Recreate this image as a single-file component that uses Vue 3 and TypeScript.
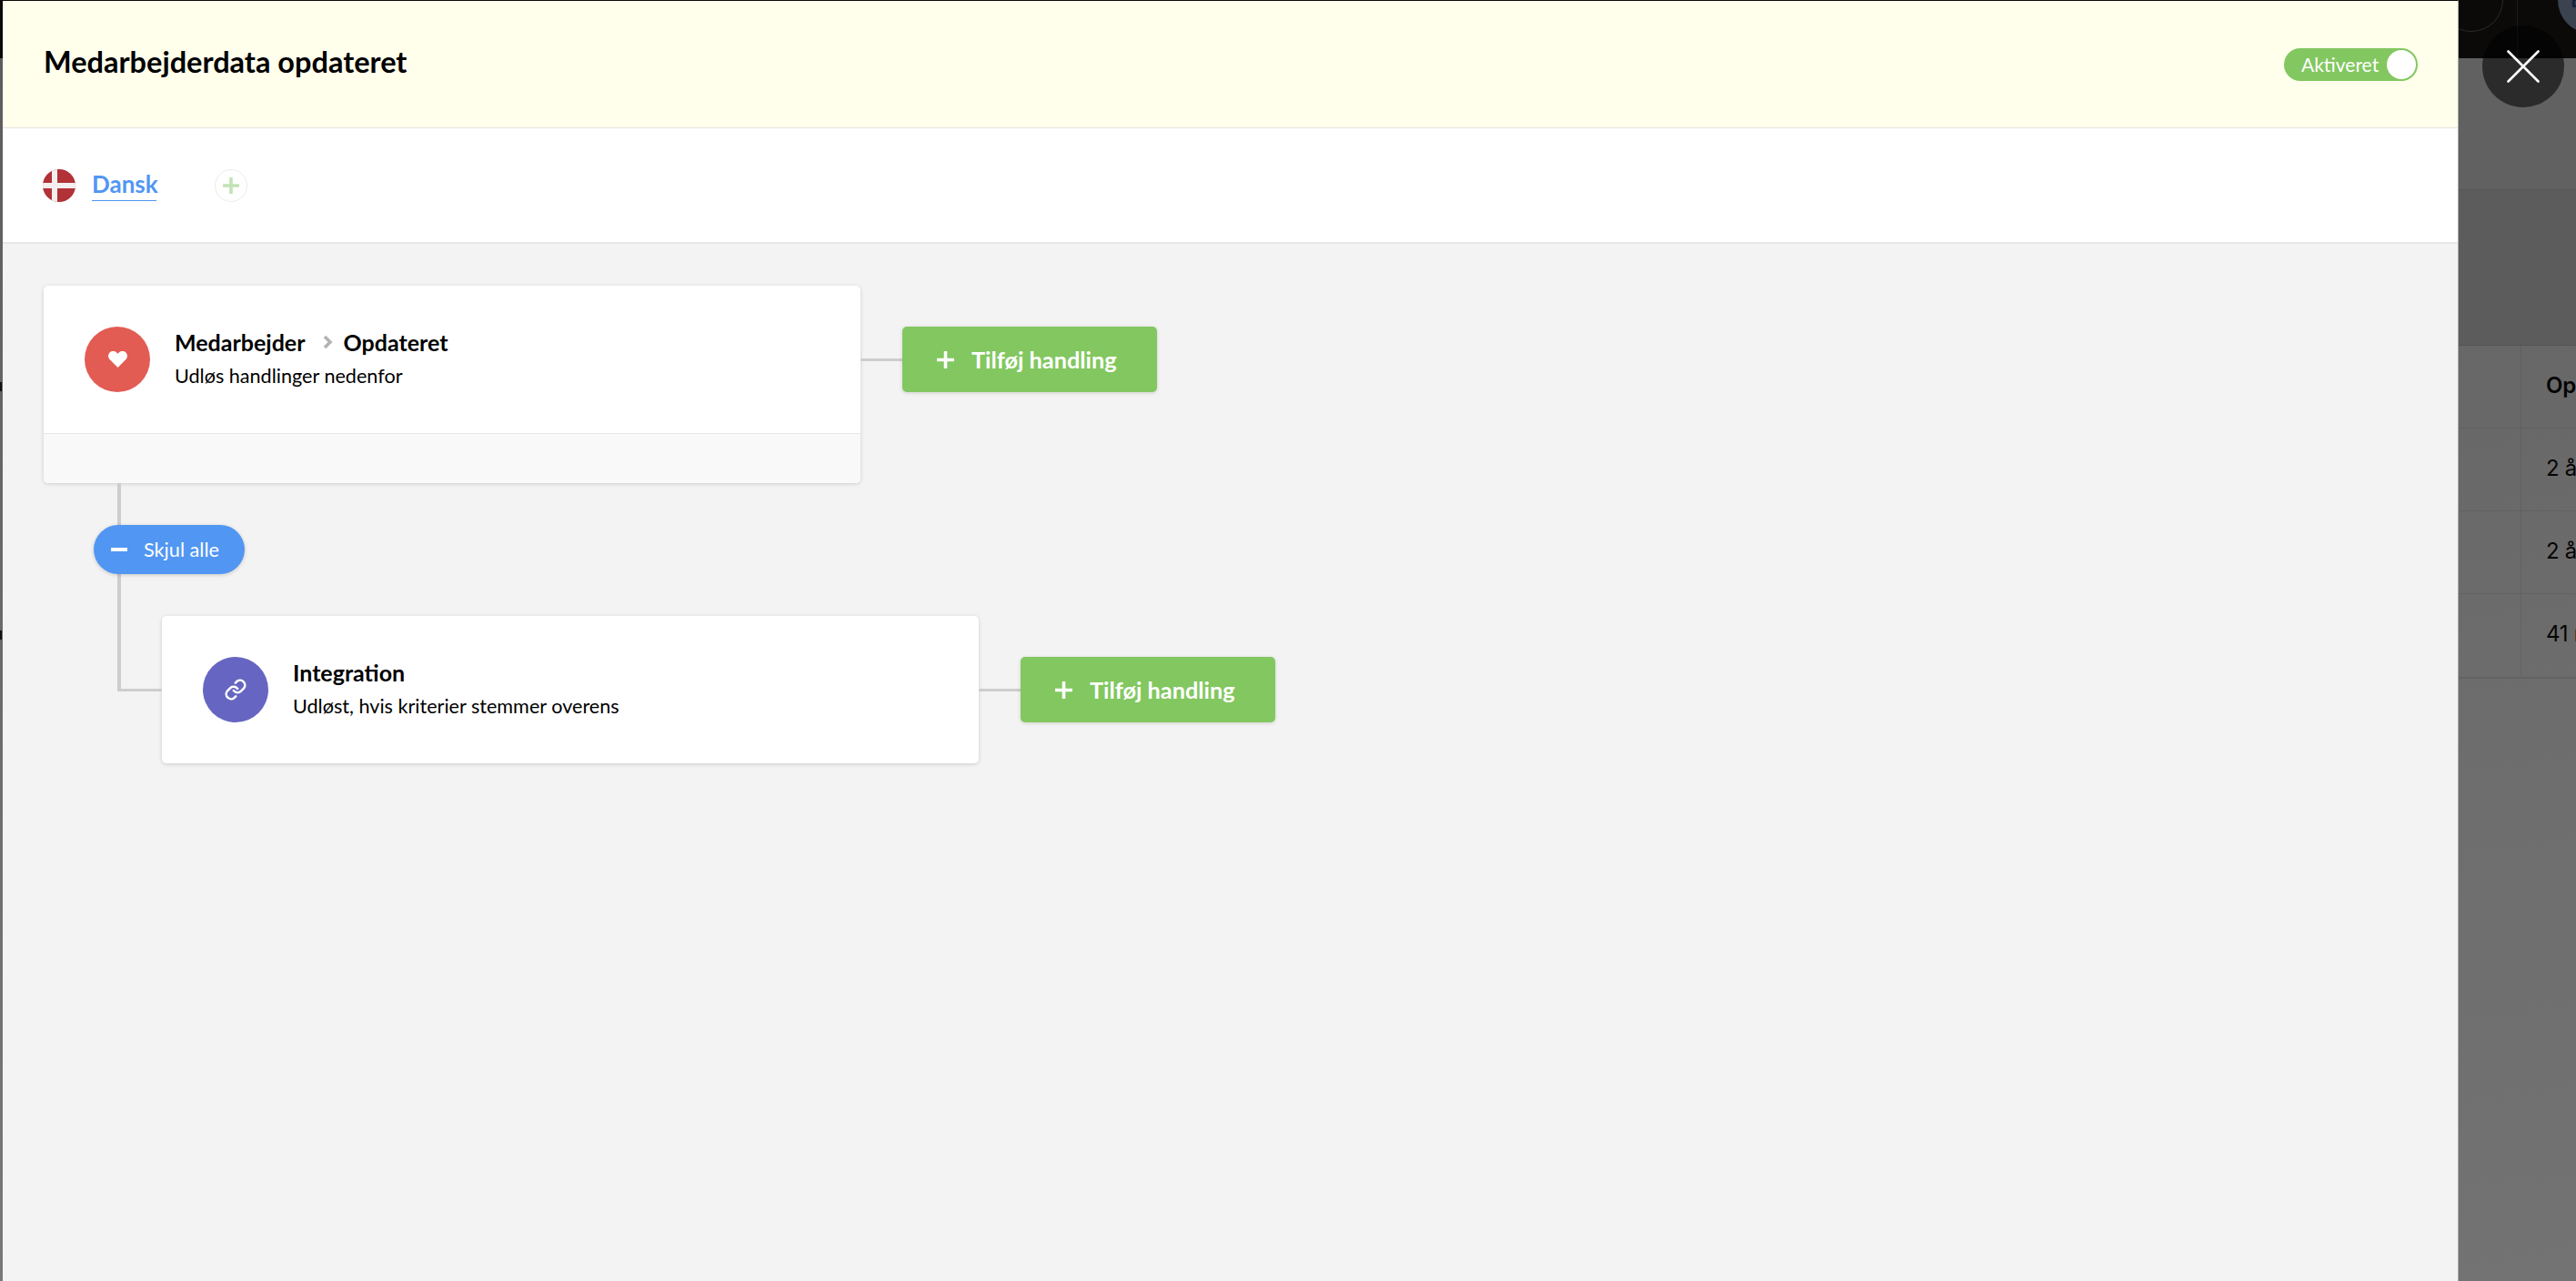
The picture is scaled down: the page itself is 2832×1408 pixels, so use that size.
<script setup lang="ts">
interface Row { text: string; bold?: boolean }
const rows: Row[] = [
  { text: 'Opdateret', bold: true },
  { text: '2 år siden' },
  { text: '2 år siden' },
  { text: '41 minutter siden' },
]
</script>

<template>
  <div class="page">
    <div class="sliver">
      <span class="sliver-top"></span>
      <span class="mark mark-a"></span>
      <span class="mark mark-b"></span>
    </div>
    <main class="modal">
      <header class="head">
        <h1 class="title">Medarbejderdata opdateret</h1>
        <div class="toggle">
          <span class="toggle-label">Aktiveret</span>
          <span class="knob"></span>
        </div>
      </header>
      <nav class="tabs">
        <svg class="flag" viewBox="0 0 36 36" aria-hidden="true">
          <clipPath id="flagclip"><circle cx="18" cy="18" r="18" /></clipPath>
          <g clip-path="url(#flagclip)">
            <rect width="36" height="36" fill="#b13237" />
            <rect x="10" width="6" height="36" fill="#f4efef" />
            <rect y="15" width="36" height="6" fill="#f4efef" />
          </g>
        </svg>
        <span class="lang">Dansk</span>
        <span class="add-lang">
          <svg viewBox="0 0 18 18" width="18" height="18" aria-hidden="true">
            <path d="M9 1v16M1 9h16" stroke="#c3e2b5" stroke-width="3.6" stroke-linecap="round" />
          </svg>
        </span>
      </nav>
      <section class="canvas">
        <div class="row">
          <article class="card">
            <div class="card-main">
              <span class="dot red">
                <svg viewBox="0 0 22 19" width="21" height="18" aria-hidden="true">
                  <path d="M11 19 1.6 9.6C-.5 7.4-.5 3.6 1.6 1.6 3.8-.5 7.4-.5 9.6 1.6L11 3l1.4-1.4c2.2-2.1 5.8-2.1 8 0 2.1 2 2.1 5.8 0 8z" fill="#fff" />
                </svg>
              </span>
              <div class="copy">
                <div class="card-title">
                  <span>Medarbejder</span>
                  <svg class="chev" viewBox="0 0 11 16" width="11" height="16" aria-hidden="true">
                    <path d="M2 2l6 6-6 6" fill="none" stroke="#b3b3b3" stroke-width="3.6" />
                  </svg>
                  <span>Opdateret</span>
                </div>
                <div class="card-sub">Udløs handlinger nedenfor</div>
              </div>
            </div>
            <div class="card-foot"></div>
          </article>
          <span class="wire"></span>
          <button class="add-btn" type="button">
            <svg viewBox="0 0 19 19" width="19" height="19" aria-hidden="true">
              <path d="M9.5 0v19M0 9.5h19" stroke="#fff" stroke-width="3.6" />
            </svg>
            <span>Tilføj handling</span>
          </button>
        </div>

        <div class="branch">
          <div class="pill-row">
            <button class="pill" type="button">
              <span class="minus"></span>
              <span>Skjul alle</span>
            </button>
          </div>
          <div class="row child-row">
            <span class="elbow"></span>
            <article class="card">
              <div class="card-main">
                <span class="dot purple">
                  <svg viewBox="0 0 24 24" width="26" height="26" fill="none" stroke="#fff" stroke-width="2.3" stroke-linecap="round" stroke-linejoin="round" aria-hidden="true">
                    <path d="M10 13a5 5 0 0 0 7.5.5l3-3a5 5 0 0 0-7-7l-1.7 1.7" />
                    <path d="M14 11a5 5 0 0 0-7.5-.5l-3 3a5 5 0 0 0 7 7l1.7-1.7" />
                  </svg>
                </span>
                <div class="copy">
                  <div class="card-title"><span>Integration</span></div>
                  <div class="card-sub">Udløst, hvis kriterier stemmer overens</div>
                </div>
              </div>
            </article>
            <span class="wire"></span>
            <button class="add-btn" type="button">
              <svg viewBox="0 0 19 19" width="19" height="19" aria-hidden="true">
                <path d="M9.5 0v19M0 9.5h19" stroke="#fff" stroke-width="3.6" />
              </svg>
              <span>Tilføj handling</span>
            </button>
          </div>
        </div>
      </section>
    </main>

    <aside class="backdrop">
      <div class="topbar">
        <span class="ring"></span>
        <span class="rule"></span>
        <span class="avatar">E</span>
      </div>
      <div class="band-a"></div>
      <div class="band-b"></div>
      <div class="table">
        <div v-for="r in rows" :key="r.text" class="t-row">
          <div class="t-spacer"></div>
          <div class="t-cell" :class="{ strong: r.bold }">{{ r.text }}</div>
        </div>
      </div>
      <button class="close" type="button" aria-label="Luk">
        <svg viewBox="0 0 36 36" width="36" height="36" aria-hidden="true">
          <path d="M1.5 1.5l33 33M34.5 1.5l-33 33" stroke="#fff" stroke-width="2.6" stroke-linecap="round" />
        </svg>
      </button>
    </aside>
  </div>
</template>

<style>
html, body { margin: 0; background: #5c5c5c; overflow: hidden; }
</style>

<style scoped>
.page {
  width: 2832px;
  height: 1408px;
  display: flex;
  overflow: hidden;
  font-family: Lato, "Open Sans", sans-serif;
  color: #000;
  background: #555;
}
.sliver {
  width: 3px;
  flex: none;
  display: flex;
  flex-direction: column;
  background: linear-gradient(180deg, #5c5c5c, #787878);
}
.sliver-top { height: 64px; background: #0b0a09; }
.mark { width: 2px; height: 10px; background: #111; }
.mark-a { margin-top: 356px; }
.mark-b { margin-top: 263px; }
.modal {
  width: 2700px;
  flex: none;
  box-sizing: border-box;
  display: flex;
  flex-direction: column;
  background: #f3f3f3;
  border-top: 1px solid #0b0a09;
  border-right: 1px solid #a8a8a8;
}
.head {
  height: 140px;
  box-sizing: border-box;
  flex: none;
  display: flex;
  align-items: center;
  justify-content: space-between;
  padding: 0 44px 0 45px;
  background: #ffffec;
  border-bottom: 1px solid #e3e3e3;
}
.title { margin: 0; font-size: 32.5px; font-weight: 700; line-height: 1; position: relative; top: -2px; }
.toggle {
  width: 147px;
  height: 36px;
  box-sizing: border-box;
  display: flex;
  align-items: center;
  justify-content: space-between;
  padding: 0 2px 0 19px;
  border-radius: 18px;
  background: #82c760;
  color: #fff;
  font-size: 21px;
}
.knob { width: 32px; height: 32px; border-radius: 50%; background: #fff; }
.tabs {
  height: 127px;
  box-sizing: border-box;
  flex: none;
  display: flex;
  align-items: center;
  padding-left: 44px;
  background: #fff;
  border-bottom: 2px solid #e6e6e6;
}
.flag { width: 36px; height: 36px; }
.lang {
  margin-left: 18px;
  color: #5196f3;
  font-size: 26px;
  font-weight: 700;
  line-height: 32px;
  padding-bottom: 2px;
  border-bottom: 1px solid #5196f3;
  width: 71px;
}
.add-lang {
  margin-left: 64px;
  width: 36px;
  height: 36px;
  box-sizing: border-box;
  border: 1px solid #ececec;
  border-radius: 50%;
  display: flex;
  align-items: center;
  justify-content: center;
}
.canvas {
  flex: 1;
  padding: 46px 0 0 45px;
  display: flex;
  flex-direction: column;
}
.row { display: flex; align-items: flex-start; }
.card {
  width: 898px;
  flex: none;
  background: #fff;
  border-radius: 5px;
  box-shadow: 0 1px 4px rgba(0, 0, 0, .16);
  overflow: hidden;
}
.card-main {
  height: 162px;
  box-sizing: border-box;
  display: flex;
  align-items: center;
  padding-left: 45px;
}
.dot {
  width: 72px;
  height: 72px;
  border-radius: 50%;
  display: flex;
  align-items: center;
  justify-content: center;
  flex: none;
}
.red { background: #e25c54; }
.purple { background: #6666c2; }
.copy { margin-left: 27px; padding-bottom: 4px; }
.card-title {
  display: flex;
  align-items: center;
  font-size: 25px;
  font-weight: 700;
  line-height: 30px;
}
.chev { margin: 0 12px 0 19px; }
.card-sub { font-size: 21.6px; line-height: 26px; margin-top: 9px; }
.card-foot {
  height: 55px;
  box-sizing: border-box;
  background: #f9f9f9;
  border-top: 1px solid #e6e6e6;
}
.wire {
  width: 46px;
  height: 3px;
  background: #cdcdcd;
  flex: none;
  margin-top: 80px;
}
.add-btn {
  width: 280px;
  height: 72px;
  margin-top: 45px;
  flex: none;
  display: flex;
  align-items: center;
  gap: 19px;
  padding: 0 0 0 38px;
  border: 0;
  border-radius: 5px;
  background: #82c760;
  color: #fff;
  font: 700 25.3px Lato, sans-serif;
  box-shadow: 0 1px 4px rgba(0, 0, 0, .14);
}
.branch {
  margin-left: 81px;
  width: fit-content;
}
.pill-row {
  height: 146px;
  display: flex;
  align-items: center;
  border-left: 4px solid #cdcdcd;
}
.pill {
  margin-left: -30px;
  width: 166px;
  height: 54px;
  display: flex;
  align-items: center;
  gap: 18px;
  padding: 0 0 0 19px;
  border: 0;
  border-radius: 27px;
  background: #5196f3;
  color: #fff;
  font: 400 21.7px Lato, sans-serif;
  box-shadow: 0 1px 4px rgba(0, 0, 0, .18);
}
.minus { width: 18px; height: 4px; background: #fff; flex: none; }
.child-row { position: relative; padding-left: 49px; }
.elbow {
  position: absolute;
  left: 0;
  top: 0;
  width: 49px;
  height: 83px;
  box-sizing: border-box;
  border-left: 4px solid #cdcdcd;
  border-bottom: 3px solid #cdcdcd;
}
.backdrop {
  flex: 1;
  position: relative;
  display: flex;
  flex-direction: column;
  background: linear-gradient(172deg, #626262 0%, #6c6c6c 50%, #737373 100%);
}
.topbar {
  height: 64px;
  background: #0b0a09;
  flex: none;
  position: relative;
  overflow: hidden;
}
.ring {
  position: absolute;
  left: -21px;
  top: -35px;
  width: 70px;
  height: 70px;
  box-sizing: border-box;
  border: 1px solid #2a2a2a;
  border-radius: 50%;
}
.rule {
  position: absolute;
  left: 64px;
  top: 0;
  width: 1px;
  height: 64px;
  background: #1d1d1d;
}
.avatar {
  position: absolute;
  left: 109px;
  top: -37px;
  width: 74px;
  height: 74px;
  border-radius: 50%;
  background: #3b4250;
  color: #13233f;
  font-size: 22px;
  font-weight: 700;
  line-height: 74px;
  padding-left: 14px;
  box-sizing: border-box;
  overflow: hidden;
}
.band-a { height: 144px; flex: none; background: #616161; border-bottom: 1px solid rgba(0, 0, 0, .1); }
.band-b { height: 170px; flex: none; background: #5c5c5c; border-bottom: 1px solid rgba(0, 0, 0, .08); }
.table { border-bottom: 2px solid rgba(0, 0, 0, .08); }
.t-row { height: 91px; box-sizing: border-box; display: flex; border-bottom: 1px solid rgba(0, 0, 0, .08); }
.t-row:last-child { border-bottom: 0; }
.t-spacer { width: 68px; flex: none; border-right: 1px solid rgba(0, 0, 0, .08); }
.t-cell {
  padding-left: 27px;
  line-height: 88px;
  font-family: Inter, sans-serif;
  font-size: 24px;
  letter-spacing: -.3px;
  white-space: nowrap;
  color: #050505;
}
.strong { font-weight: 600; }
.close {
  position: absolute;
  left: 26px;
  top: 28px;
  width: 90px;
  height: 90px;
  padding: 0;
  border: 0;
  border-radius: 50%;
  background: rgba(0, 0, 0, .55);
  display: flex;
  align-items: center;
  justify-content: center;
}
</style>
